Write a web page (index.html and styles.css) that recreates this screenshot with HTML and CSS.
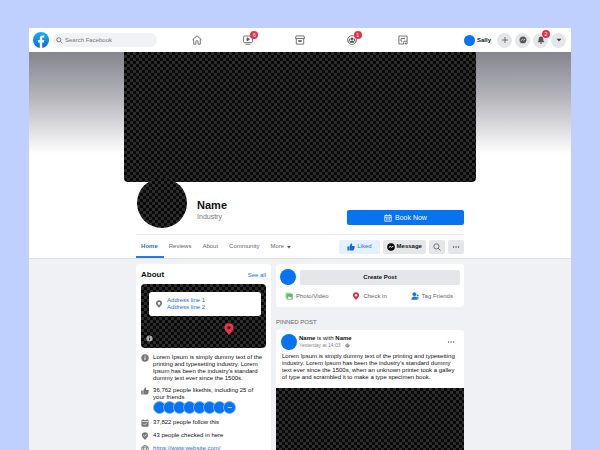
FILE: index.html
```html
<!DOCTYPE html>
<html lang="en">
<head>
<meta charset="utf-8">
<meta name="viewport" content="width=device-width, initial-scale=1">
<title>Name | Facebook</title>
<link rel="stylesheet" href="styles.css">
</head>
<body>
<div class="window">
  <header class="topbar">
    <div class="topbar-start">
      <a href="#" class="logo" aria-label="Facebook">
        <svg viewBox="0 0 16 16"><defs><linearGradient id="fb" x1="0" y1="0" x2="0" y2="1"><stop offset="0" stop-color="#1aaffc"/><stop offset="1" stop-color="#0668e4"/></linearGradient></defs><circle cx="8" cy="8" r="8" fill="url(#fb)"/><path d="M6.8 16v-5.5H4.9V8.1h1.9V6.6c0-2.1 1.1-3.2 3-3.2.6 0 1.1.1 1.5.1v2h-1c-.9 0-1.1.5-1.1 1.1v1.5h2.1l-.4 2.4H9.2V16z" fill="#fff"/></svg>
      </a>
      <label class="search">
        <svg viewBox="0 0 8 8" class="line"><circle cx="3.2" cy="3.2" r="2.4"/><path d="M5 5l2.3 2.3"/></svg>
        <input type="search" placeholder="Search Facebook" aria-label="Search Facebook">
      </label>
    </div>
    <nav class="topbar-nav" aria-label="Main">
      <a href="#" aria-label="Home"><svg viewBox="0 0 10 10" class="line"><path d="M.5 4.8L5 .8l4.500 4M1.700 4v5.200h2.200V6.500c0-.6.4-.9 1.100-.9s1.100.3 1.100.9v2.700h2.200V4"/></svg></a>
      <a href="#" aria-label="Watch"><svg viewBox="0 0 10 10" class="line"><rect x=".6" y="1" width="8.800" height="6.600" rx="1"/><path d="M2.500 9.300h5"/><path d="M4 2.800v3l2.500-1.500z" fill="#555"/></svg><span class="badge">6</span></a>
      <a href="#" aria-label="Marketplace"><svg viewBox="0 0 10 10" class="line"><path d="M1 .9h8l.5 2.600H.5zM1.300 3.500v5.600h7.400V3.500M3.500 5.500h3v1h-3z"/></svg></a>
      <a href="#" aria-label="Groups"><svg viewBox="0 0 10 10" class="line"><circle cx="5" cy="5" r="4.400"/><g fill="#555" stroke="none"><circle cx="5" cy="3.700" r="1.300"/><circle cx="2.700" cy="4.200" r=".8"/><circle cx="7.300" cy="4.200" r=".8"/><path d="M2.600 7.800c0-3 4.800-3 4.800 0zM1.300 6.800c0-1.700 1.200-1.900 1.700-1.500l-.9 1.500zM8.700 6.800c0-1.700-1.200-1.900-1.700-1.500l.9 1.500z"/></g></svg><span class="badge">1</span></a>
      <a href="#" aria-label="Gaming"><svg viewBox="0 0 10 10" class="line"><path d="M.9 1h8.200v5.200H5.800V9H.9zM9.100 6.200V9H7.500V7.700M3 3.500h4M3 3.500v2.700h1.300"/></svg></a>
    </nav>
    <div class="topbar-end">
      <a href="#" class="user"><span class="dot dot-user"></span>Sally</a>
      <button class="round" aria-label="Create"><svg viewBox="0 0 8 8" class="line"><path d="M4 1v6M1 4h6"/></svg></button>
      <button class="round" aria-label="Messenger"><svg viewBox="0 0 8 8"><path d="M4 .5C1.900.5.500 2 .5 3.900c0 1 .4 1.900 1.100 2.500v1.200l1.200-.5c.4.1.8.200 1.200.200 2.100 0 3.500-1.500 3.500-3.400S6.100.5 4 .5z" fill="#555"/><path d="M1.800 4.800l1.600-1.500 1.100.8 1.700-.8" fill="none" stroke="#eee" stroke-width=".8"/></svg></button>
      <button class="round" aria-label="Notifications"><svg viewBox="0 0 8 8"><path d="M4 .5C2.400.5 1.700 1.700 1.700 3v1.400L.8 5.700v.6h6.400v-.6l-.9-1.300V3C6.300 1.700 5.600.5 4 .5zM3 6.700h2c0 1.300-2 1.300-2 0z" fill="#555"/></svg><span class="badge">2</span></button>
      <button class="round" aria-label="Account"><svg viewBox="0 0 8 8"><path d="M1.500 2.800h5L4 5.600z" fill="#444"/></svg></button>
    </div>
  </header>

  <section class="hero">
    <div class="cover checker"></div>
    <div class="profile column">
      <div class="avatar checker"></div>
      <div class="title">
        <h1>Name</h1>
        <p>Industry</p>
      </div>
      <button class="book"><svg viewBox="0 0 8 8" class="icon"><path d="M.8 1.500h6.400v5.700H.8zM.8 3.200h6.400M2.300.4v1.500M5.700.4v1.500" fill="none" stroke="#fff" stroke-width=".8"/><path d="M2.200 4.400h3.600M2.200 5.700h3.600" stroke="#fff" stroke-width=".8" stroke-dasharray=".9 .45"/></svg>Book Now</button>
    </div>
    <div class="tabbar column">
      <nav class="tabs" aria-label="Page">
        <a href="#" class="active">Home</a>
        <a href="#">Reviews</a>
        <a href="#">About</a>
        <a href="#">Community</a>
        <a href="#">More <svg viewBox="0 0 4 4" class="caret"><path d="M0 1h4L2 3.400z" fill="#555"/></svg></a>
      </nav>
      <div class="actions">
        <button class="liked"><svg viewBox="0 0 8 8" class="icon"><path d="M.4 3.500h1.500v4H.4zM2.400 3.600L4 .6c1-.1 1.300.6 1.100 1.300l-.3 1.200h2.100c.7 0 .9.6.7 1.200l-.6 2.300c-.1.5-.5.8-1 .8H2.400z" fill="#1268dd"/></svg>Liked</button>
        <button class="message"><svg viewBox="0 0 8 8" class="icon"><circle cx="4" cy="4" r="3.800"/><path d="M1.700 4.700l1.600-1.400 1.200.9 1.800-.9" fill="none" stroke="#fff"/></svg>Message</button>
        <button class="square" aria-label="Search"><svg viewBox="0 0 8 8" class="line icon"><circle cx="3.400" cy="3.400" r="2.600"/><path d="M5.300 5.300l2.200 2.200"/></svg></button>
        <button class="square" aria-label="More actions"><svg viewBox="0 0 8 8" class="icon"><path d="M1.500 4h.1M4 4h.1M6.500 4h.1" stroke="#444" stroke-linecap="round" stroke-width="1.300"/></svg></button>
      </div>
    </div>
  </section>

  <main class="content column">
    <section class="card about">
      <div class="about-head"><h2>About</h2><a href="#">See all</a></div>
      <div class="map checker">
        <div class="address">
          <svg viewBox="0 0 8 8" class="icon"><path d="M4 .3C2.200.3.900 1.600.9 3.300.9 5.100 2.700 6.300 4 7.800c1.300-1.500 3.100-2.700 3.100-4.500C7.100 1.600 5.800.3 4 .3zm0 1.800a1.300 1.300 0 110 2.600 1.300 1.300 0 010-2.600z" fill="#777" fill-rule="evenodd"/></svg>
          <a href="#">Address line 1<br>Address line 2</a>
        </div>
        <div class="map-foot">
          <svg viewBox="0 0 8 8" class="map-info"><circle cx="4" cy="4" r="3.500" fill="#aaa"/><path d="M4 3.400V6M4 1.800v.8" stroke="#222"/></svg>
          <svg viewBox="0 0 10 12" class="map-pin"><path d="M5 .3C2.400.3.400 2.200.4 4.700.4 7.400 3.200 9.200 5 11.800c1.800-2.600 4.600-4.400 4.600-7.100C9.600 2.200 7.600.3 5 .3z" fill="#ee3350"/><circle cx="5" cy="4.700" r="1.800" fill="#541522"/></svg>
        </div>
      </div>
      <ul class="facts">
        <li><svg viewBox="0 0 8 8"><circle cx="4" cy="4" r="3.700" fill="#777"/><path d="M4 3.400V6M4 1.700v.9" stroke="#fff"/></svg><p>Lorem Ipsum is simply dummy text of the printing and typesetting industry. Lorem Ipsum has been the industry’s standard dummy text ever since the 1500s.</p></li>
        <li><svg viewBox="0 0 8 8"><path d="M.2 3.500h1.600v4H.2zM2.300 3.600L4 .6c1-.1 1.300.6 1.100 1.300l-.3 1.200h2.300c.7 0 .9.6.7 1.200l-.6 2.300c-.1.5-.5.8-1 .8H2.300z" fill="#777"/></svg>
          <div><p>36,762 people likethis, including 25 of your friends</p>
          <div class="friends"><span></span><span></span><span></span><span></span><span></span><span></span><span></span><span>•••</span></div></div></li>
        <li><svg viewBox="0 0 8 8"><rect x=".4" y="1" width="7.200" height="6.700" rx="1" fill="#777"/><path d="M2 .3v1.500M6 .3v1.500" stroke="#777"/><path d="M1 2.500h6M2.400 4.900l1.200 1.200 2.100-2.200" fill="none" stroke="#fff" stroke-width=".7"/></svg><p>37,822 people follow this</p></li>
        <li><svg viewBox="0 0 8 8"><path d="M4 .2C2.200.2.900 1.400.9 3.200.9 5.100 2.700 6.300 4 7.900c1.300-1.600 3.100-2.800 3.100-4.700C7.100 1.400 5.800.2 4 .2z" fill="#777"/><path d="M2.600 3.400l1 1 1.900-2" fill="none" stroke="#fff" stroke-width=".8"/></svg><p>43 people checked in here</p></li>
        <li><svg viewBox="0 0 8 8"><g fill="none" stroke="#777" stroke-width=".8"><circle cx="4" cy="4" r="3.500"/><ellipse cx="4" cy="4" rx="1.600" ry="3.500"/><path d="M.7 2.800h6.600M.7 5.200h6.600"/></g></svg><p><a href="#">https://www.website.com/</a></p></li>
      </ul>
    </section>

    <div class="feed">
      <section class="card composer">
        <div class="composer-top"><span class="dot dot-big"></span><button class="create">Create Post</button></div>
        <div class="composer-actions">
          <button><svg viewBox="0 0 8 8" class="icon"><rect x=".3" y=".5" width="6" height="5.500" fill="#b5dfb8"/><path d="M1.500 1.800h6.200v5.800H1.500z" fill="#62b56b"/><path d="M2.200 6.700l1.700-2.400 1.200 1.300.9-.8 1 1.900z" fill="#fff"/></svg>Photo/Video</button>
          <button><svg viewBox="0 0 8 8" class="icon"><path d="M4 .2C2.200.2.900 1.400.9 3.200.9 5.100 2.700 6.300 4 7.900c1.300-1.600 3.100-2.800 3.100-4.700C7.100 1.400 5.800.2 4 .2z" fill="#df2947"/><circle cx="4" cy="3.200" r="1.200" fill="#fff"/></svg>Check in</button>
          <button><svg viewBox="0 0 8 8" class="icon"><g fill="#1678e6"><circle cx="3.400" cy="2.200" r="1.900"/><path d="M.3 7.700c0-4.300 6.400-4.300 6.400 0z"/><circle cx="6.600" cy="3.500" r="1"/><path d="M5.800 5c1.300-.4 2 .3 2 1.800H6.700z"/></g></svg>Tag Friends</button>
        </div>
      </section>
      <h3>PINNED POST</h3>
      <article class="card post">
        <div class="post-head">
          <span class="dot dot-big"></span>
          <div class="byline"><p><strong>Name</strong> is with <strong>Name</strong></p>
          <p class="time">Yesterday at 14:03 · <svg viewBox="0 0 6 6"><circle cx="3" cy="3" r="2.500" fill="#888"/><path d="M1.500 2l1 .8-.3 1M3.500 1l.4 1.200 1 .3" fill="none" stroke="#fff" stroke-width=".6"/></svg></p></div>
          <button class="more" aria-label="Post options"><svg viewBox="0 0 8 8" class="icon"><path d="M1.500 4h.1M4 4h.1M6.500 4h.1" stroke="#666" stroke-linecap="round" stroke-width="1.300"/></svg></button>
        </div>
        <p class="post-text">Lorem Ipsum is simply dummy text of the printing and typesetting industry. Lorem Ipsum has been the industry’s standard dummy text ever since the 1500s, when an unknown printer took a galley of type and scrambled it to make a type specimen book.</p>
        <div class="post-image checker"></div>
      </article>
    </div>
  </main>
</div>
</body>
</html>
```
FILE: styles.css
```css
* { box-sizing: border-box; }

body {
  margin: 0;
  height: 100vh;
  padding: 28px 29px 0;
  overflow: hidden;
  background: #bfd0ff;
  color: #111;
  font: 6px/7px "Liberation Sans", Arial, sans-serif;
}

h1, h2, h3, p, ul { margin: 0; padding: 0; }
ul { list-style: none; }
a { color: inherit; text-decoration: none; }
svg { display: block; flex: none; }
button {
  display: flex;
  align-items: center;
  justify-content: center;
  gap: 3px;
  padding: 0;
  border: 0;
  border-radius: 2px;
  background: #e5e6ea;
  color: inherit;
  font: inherit;
}

.line { fill: none; stroke: #555; stroke-width: 0.8; }
.icon { width: 8px; height: 8px; }
.column { width: 60.5%; margin: 0 auto; }
.dot { flex: none; border-radius: 50%; background: #0573f2; }
.dot-user { width: 11px; height: 11px; }
.dot-big { width: 16px; height: 16px; }

.checker {
  background: repeating-conic-gradient(#2b2b2b 0 25%, #080808 0 50%) 0 0 / 6px 6px;
}

.window { min-height: 100%; background: #eff1f5; }

/* Top bar */
.topbar {
  display: grid;
  grid-template-columns: 1fr 258px 1fr;
  align-items: center;
  height: 24px;
  background: #fff;
}
.topbar-start { display: flex; align-items: center; gap: 4px; padding-left: 4px; }
.logo svg { width: 16px; height: 16px; }
.search {
  display: flex;
  align-items: center;
  gap: 2px;
  width: 104px;
  height: 14px;
  padding: 0 3px;
  border-radius: 7px;
  background: #f0f2f5;
}
.search svg { width: 7px; height: 7px; }
.search input {
  flex: 1;
  min-width: 0;
  padding: 0;
  border: 0;
  background: none;
  font: inherit;
}
.search input::placeholder { color: #777; opacity: 1; }
.topbar-nav { display: grid; grid-template-columns: repeat(5, 1fr); justify-items: center; }
.topbar-nav a, .round { position: relative; }
.topbar-nav svg { width: 10px; height: 10px; }
.badge {
  position: absolute;
  top: -4px;
  right: -5px;
  width: 8px;
  height: 8px;
  border-radius: 50%;
  background: #e8304c;
  color: #fff;
  font-size: 5px;
  line-height: 8px;
  text-align: center;
}
.round .badge { right: -2px; top: -3px; }
.topbar-end { display: flex; align-items: center; justify-content: flex-end; gap: 3px; padding-right: 5px; }
.user { display: flex; align-items: center; gap: 2px; margin-right: 3px; font-weight: bold; }
.round { width: 15px; height: 15px; border-radius: 50%; }
.round svg { width: 8px; height: 8px; }

/* Profile header */
.hero {
  border-bottom: 1px solid #dfe1e6;
  background: #fff linear-gradient(#85858e, #b4b4ba 45px, #fff 102px) no-repeat;
}
.cover { width: 65%; height: 130px; margin: 0 auto; border-radius: 0 0 4px 4px; }
.profile {
  display: flex;
  align-items: flex-end;
  height: 53px;
  padding-bottom: 6px;
  border-bottom: 1px solid #e8e9ec;
}
.avatar { flex: none; width: 50px; height: 50px; margin-left: 1px; border-radius: 50%; }
.title { flex: 1; margin-left: 10px; padding-bottom: 8px; color: #777; font-size: 7px; }
.title h1 { margin-bottom: 2px; color: #111; font-size: 11px; line-height: 12px; }
.book {
  width: 117px;
  height: 15px;
  margin-bottom: 3px;
  background: #0573f2;
  color: #fff;
  font-size: 7px;
}
.tabbar { display: flex; align-items: stretch; justify-content: space-between; height: 23px; }
.tabs { display: flex; color: #666; }
.tabs a { display: flex; align-items: center; gap: 3px; padding: 2px 6px 0 5px; border-bottom: 2px solid transparent; }
.tabs .active { border-color: #2878df; color: #1b6fde; font-weight: bold; }
.caret { width: 4px; height: 4px; }
.actions { display: flex; align-items: center; gap: 3px; }
.actions button { height: 14px; padding: 0 4px; gap: 2px; }
.actions .liked { padding: 0 8px; background: #e5f1ff; color: #1b6fde; }
.message { font-weight: bold; }

/* Page body */
.content { display: grid; grid-template-columns: 135fr 188fr; gap: 5px; padding-top: 5px; }
.card { border-radius: 3px; background: #fff; }
.about { padding: 6px 5px; }
.about-head { display: flex; align-items: center; justify-content: space-between; height: 10px; margin-bottom: 4px; }
.about-head h2 { font-size: 8px; line-height: 10px; }
.about a { color: #1b6fde; }
.map { height: 64px; padding: 8px 5px 0 8px; border-radius: 4px; }
.address {
  display: flex;
  align-items: center;
  gap: 4px;
  height: 24px;
  padding: 0 6px;
  border-radius: 3px;
  background: #fff;
}
.map-foot { display: flex; align-items: flex-end; justify-content: space-between; height: 26px; padding-right: 27px; }
.map-info { width: 7px; height: 7px; margin-left: -3px; }
.map-pin { width: 10px; height: 12px; margin-bottom: 7px; }
.facts { display: grid; gap: 5px; padding-top: 6px; }
.facts li { display: flex; gap: 4px; }
.facts li > svg { width: 8px; height: 8px; }
.friends { display: flex; }
.friends span {
  width: 13px;
  height: 13px;
  margin-right: -3px;
  border: 1px solid #7fb4f5;
  border-radius: 50%;
  background: #0573f2;
  color: #fff;
  font-size: 4px;
  line-height: 11px;
  text-align: center;
}

/* Feed */
.composer { padding: 5px 4px; }
.composer-top { display: flex; align-items: center; gap: 4px; }
.create { flex: 1; height: 15px; font-weight: bold; }
.composer-actions { display: flex; justify-content: space-between; padding: 7px 7px 2px 5px; color: #666; }
.composer-actions button { background: none; }
.feed h3 { margin: 12px 0 4px; color: #666; font-size: 6px; font-weight: normal; line-height: 7px; }
.post-head { display: flex; align-items: center; gap: 2px; padding: 4px 9px 3px 5px; }
.byline { flex: 1; }
.time { display: flex; align-items: center; gap: 1px; color: #888; font-size: 5px; }
.time svg { width: 5px; height: 5px; }
.more { background: none; }
.post-text { padding: 0 6px 7px; }
.post-image { height: 120px; }
```
